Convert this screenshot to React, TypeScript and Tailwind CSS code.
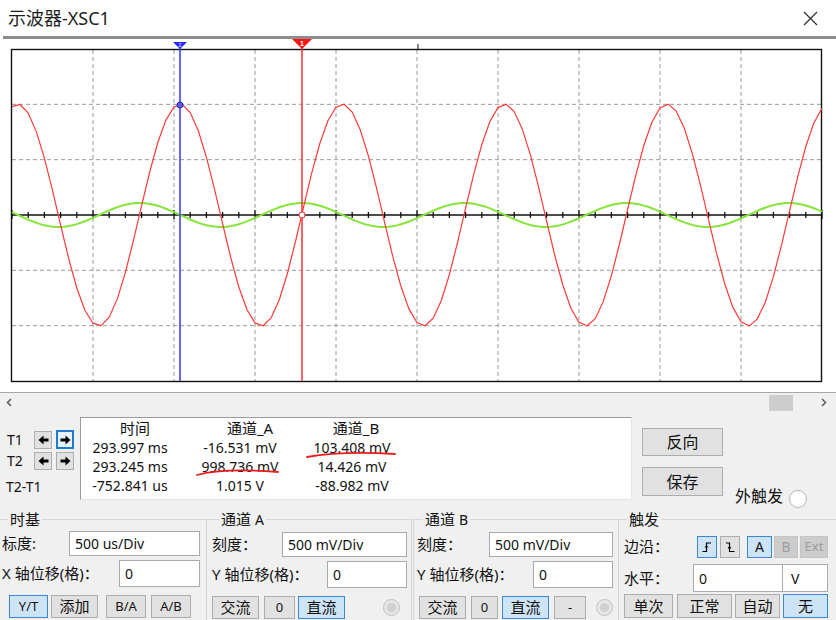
import React from "react";

const PERIOD = 162.3;
const CY = 176;

const wave = (amp: number, phaseX: number, step: number) => {
  const pts: string[] = [];
  for (let x = 12; x <= 822.01; x += step) {
    const y = CY - amp * Math.cos((2 * Math.PI * (x - phaseX)) / PERIOD);
    pts.push(`${x.toFixed(1)},${y.toFixed(1)}`);
  }
  return pts.join(" ");
};

const Scope = () => {
  const vlines = [1, 2, 3, 4, 5, 6, 7, 8, 9].map((k) => 12 + 81 * k);
  const hlines = [1, 2, 4, 5].map((k) => 10 + (332 / 6) * k);
  const ticks = Array.from({ length: 51 }, (_, i) => i);
  return (
    <svg width="836" height="353" className="block bg-white">
      {vlines.map((x) => (
        <line key={x} x1={x} y1={11} x2={x} y2={342} stroke="#9a9a9a" strokeWidth="1" strokeDasharray="4 3" />
      ))}
      {hlines.map((y) => (
        <line key={y} x1={12} y1={y} x2={822} y2={y} stroke="#9a9a9a" strokeWidth="1" strokeDasharray="4 3" />
      ))}
      <line x1={12} y1={CY} x2={822} y2={CY} stroke="#111" strokeWidth="1.5" />
      {ticks.map((i) => {
        const x = 12 + i * 16.2;
        const big = i % 5 === 0;
        return <line key={i} x1={x} y1={CY - (big ? 5 : 3)} x2={x} y2={CY + (big ? 4 : 3)} stroke="#111" strokeWidth="1.3" />;
      })}
      <rect x={11.5} y={10.5} width={810} height={332} fill="none" stroke="#111" strokeWidth="1.4" />
      <line x1={418} y1={5} x2={418} y2={10} stroke="#111" strokeWidth="1" />
      <polyline points={wave(12, 302, 4.05)} fill="none" stroke="#86e43a" strokeWidth="2" />
      <polyline points={wave(111, 180, 8.1)} fill="none" stroke="#ff3a3a" strokeWidth="1.2" />
      {/* cursor 2 (blue) */}
      <line x1={180} y1={4} x2={180} y2={342} stroke="#3434ff" strokeWidth="1.5" />
      <polygon points="173,3 187,3 180,10" fill="#2424ff" />
      <text x={180} y={8} fontSize="5" fill="#fff" textAnchor="middle" fontFamily="Liberation Sans, sans-serif">2</text>
      <circle cx={180} cy={66} r={3} fill="#5a5aff" stroke="#2a2a9a" strokeWidth="1" />
      {/* cursor 1 (red) */}
      <line x1={302} y1={4} x2={302} y2={342} stroke="#ff3030" strokeWidth="1.5" />
      <polygon points="292,0 312,0 302,10" fill="#ff1414" />
      <text x={302} y={7} fontSize="7" fontWeight="bold" fill="#fff" textAnchor="middle" fontFamily="Liberation Sans, sans-serif">1</text>
      <circle cx={302} cy={CY} r={3} fill="#fff" stroke="#ff3030" strokeWidth="1" />
    </svg>
  );
};

const Arrow = ({ dir }: { dir: "l" | "r" }) => (
  <svg width="11" height="10" viewBox="0 0 11 10">
    <path
      d={dir === "r" ? "M0.5 3.5 H5.5 V0.5 L10.5 5 L5.5 9.5 V6.5 H0.5 Z" : "M10.5 3.5 H5.5 V0.5 L0.5 5 L5.5 9.5 V6.5 H10.5 Z"}
      fill="#000"
    />
  </svg>
);

function Btn({
  className = "",
  on = false,
  dis = false,
  children,
}: {
  className?: string;
  on?: boolean;
  dis?: boolean;
  children?: React.ReactNode;
}) {
  const tone = on
    ? "border-[#3a87d4] bg-[#cde4f7] text-[#111]"
    : dis
    ? "border-[#c4c4c4] bg-[#cccccc] text-[#9c9c9c]"
    : "border-[#adadad] bg-[#e1e1e1] text-[#111]";
  return <div className={`flex items-center justify-center border ${tone} ${className}`}>{children}</div>;
}

function Field({ className = "", children }: { className?: string; children?: React.ReactNode }) {
  return (
    <div className={`flex items-center border border-[#a9a9a9] bg-white pl-[5px] text-[14px] text-[#111] ${className}`}>
      {children}
    </div>
  );
}

const Radio = ({ className = "", dim = false }: { className?: string; dim?: boolean }) => (
  <div
    className={`flex items-center justify-center rounded-full border ${
      dim ? "border-[#c2c2c2] bg-[#e6e6e6]" : "border-[#b5b5b5] bg-white"
    } ${className}`}
  >
    {dim && <div className="h-[9px] w-[9px] rounded-full bg-[#d0d0d0]" />}
  </div>
);

const EdgeIcon = ({ up }: { up: boolean }) => (
  <svg width="12" height="12" viewBox="0 0 12 12">
    <path d={up ? "M1.5 10.5 H5.5 V2 H10" : "M2 2 H5.5 V10.5 H10.5"} fill="none" stroke="#000" strokeWidth="1.2" />
    <path d={up ? "M4 6.5 L5.5 4.5 L7 6.5" : "M4 6 L5.5 8 L7 6"} fill="none" stroke="#000" strokeWidth="1" />
  </svg>
);

const Chevron = ({ dir }: { dir: "l" | "r" }) => (
  <svg width="6" height="9" viewBox="0 0 6 9">
    <path d={dir === "l" ? "M5 1 L1.5 4.5 L5 8" : "M1 1 L4.5 4.5 L1 8"} fill="none" stroke="#606060" strokeWidth="1.6" />
  </svg>
);

const rows = [
  ["293.997 ms", "-16.531 mV", "103.408 mV"],
  ["293.245 ms", "998.736 mV", "14.426 mV"],
  ["-752.841 us", "1.015 V", "-88.982 mV"],
];

export default function App() {
  return (
    <div className="h-[620px] w-[836px] overflow-hidden bg-[#f0f0f0] font-['Noto_Sans','Noto_Sans_CJK_SC',sans-serif] text-[#111]">
      {/* title bar */}
      <div className="flex h-[36px] items-center justify-between bg-white pl-[8px] pr-[18px]">
        <span className="text-[18px] leading-none text-[#1e1e1e]">示波器-XSC1</span>
        <svg width="15" height="15" viewBox="0 0 15 15">
          <path d="M1 1 L14 14 M14 1 L1 14" stroke="#333" strokeWidth="1.3" />
        </svg>
      </div>
      <div className="bg-white pl-[3px]">
        <div className="h-[3px] bg-[#8c8c8c]" />
      </div>
      <Scope />

      {/* scroll bar */}
      <div className="flex h-[20px] items-center border-t border-[#a8a8a8] pl-[6px]">
        <Chevron dir="l" />
        <div className="ml-[757px] mt-[2px] h-[16px] w-[24px] self-start bg-[#cdcdcd]" />
        <div className="ml-[28px]">
          <Chevron dir="r" />
        </div>
      </div>

      {/* measurement panel */}
      <div className="relative flex h-[93px] pt-[5px]">
        <div className="w-[80px] pt-[14px] text-[14px]">
          <div className="flex h-[17px] items-center">
            <span className="w-[34px] pl-[7px]">T1</span>
            <Btn className="h-[18px] w-[18px]">
              <Arrow dir="l" />
            </Btn>
            <div className="ml-[4px] flex h-[19px] w-[18px] items-center justify-center border-2 border-[#1f7bd1] bg-[#e5f1fb]">
              <Arrow dir="r" />
            </div>
          </div>
          <div className="mt-[4px] flex h-[17px] items-center">
            <span className="w-[34px] pl-[7px]">T2</span>
            <Btn className="h-[18px] w-[18px]">
              <Arrow dir="l" />
            </Btn>
            <Btn className="ml-[4px] h-[18px] w-[18px]">
              <Arrow dir="r" />
            </Btn>
          </div>
          <div className="mt-[9px] flex h-[16px] items-center pl-[6px]">T2-T1</div>
        </div>

        <div className="h-[83px] w-[552px] border border-[#9b9b9b] border-b-[#e4e4e4] border-r-[#e4e4e4] bg-white pt-[1px] text-[14px]">
          <div className="grid h-[19px] grid-cols-[98px_122px_102px] items-center text-[15px] leading-none">
            <span className="pl-[10px] text-center">时间</span>
            <span className="pl-[20px] text-center">通道_A</span>
            <span className="pl-[8px] text-center">通道_B</span>
          </div>
          {rows.map((r, i) => (
            <div key={i} className="grid h-[19px] grid-cols-[98px_122px_102px] items-center leading-none">
              {r.map((c, j) => (
                <span key={j} className="text-center">
                  {c}
                </span>
              ))}
            </div>
          ))}
        </div>

        <div className="ml-[10px] pt-[11px] text-[16px]">
          <Btn className="h-[28px] w-[81px]">反向</Btn>
          <Btn className="mt-[11px] h-[29px] w-[81px]">保存</Btn>
        </div>
        <div className="ml-[12px] mt-[69px] flex h-[20px] items-center text-[16px]">
          <span>外触发</span>
          <Radio className="ml-[6px] mt-[6px] h-[18px] w-[18px]" />
        </div>

        {/* hand-drawn annotations */}
        <svg className="absolute left-0 top-0" width="420" height="93" viewBox="0 0 420 93">
          <path d="M197 63 C215 58 240 57 278 60" fill="none" stroke="#ee1c1c" strokeWidth="1.8" strokeLinecap="round" />
          <path d="M307 45 C335 40 365 40 395 42" fill="none" stroke="#ee1c1c" strokeWidth="1.8" strokeLinecap="round" />
        </svg>
      </div>

      {/* bottom controls */}
      <div className="flex h-[115px] pt-[5px] text-[15px]">
        <fieldset className="h-[110px] w-[207px] border-t border-r border-[#d6d6d6]">
          <legend className="ml-[8px] px-[2px] leading-[18px]">时基</legend>
          <div className="mt-[3px] flex h-[25px] items-center">
            <span className="w-[69px] pl-[2px]">标度:</span>
            <Field className="h-[25px] w-[131px]">500 us/Div</Field>
          </div>
          <div className="mt-[4px] flex h-[27px] items-center">
            <span className="w-[119px] pl-[2px]">X 轴位移(格)：</span>
            <Field className="h-[27px] w-[81px]">0</Field>
          </div>
          <div className="mt-[8px] flex h-[23px] items-center">
            <Btn on className="ml-[9px] h-[23px] w-[39px] text-[13px]">Y/T</Btn>
            <Btn className="ml-[3px] h-[23px] w-[47px]">添加</Btn>
            <Btn className="ml-[8px] h-[23px] w-[40px] text-[13px]">B/A</Btn>
            <Btn className="ml-[5px] h-[23px] w-[40px] text-[13px]">A/B</Btn>
          </div>
        </fieldset>

        <fieldset className="h-[110px] w-[205px] border-t border-r border-[#d6d6d6] pl-[5px]">
          <legend className="ml-[7px] px-[2px] leading-[18px]">
            通道 <span className="text-[14px]">A</span>
          </legend>
          <div className="mt-[3px] flex h-[25px] items-center">
            <span className="w-[70px]">刻度：</span>
            <Field className="h-[25px] w-[125px]">500 mV/Div</Field>
          </div>
          <div className="mt-[4px] flex h-[27px] items-center">
            <span className="w-[115px]">Y 轴位移(格)：</span>
            <Field className="h-[27px] w-[80px]">0</Field>
          </div>
          <div className="mt-[8px] flex h-[23px] items-center">
            <Btn className="h-[23px] w-[47px]">交流</Btn>
            <Btn className="ml-[5px] h-[23px] w-[31px] text-[13px]">0</Btn>
            <Btn on className="ml-[3px] h-[23px] w-[47px]">直流</Btn>
            <Radio dim className="ml-[38px] h-[17px] w-[17px]" />
          </div>
        </fieldset>

        <fieldset className="ml-[1px] h-[110px] w-[206px] border-t border-r border-l border-[#d6d6d6] pl-[3px]">
          <legend className="ml-[6px] px-[2px] leading-[18px]">
            通道 <span className="text-[14px]">B</span>
          </legend>
          <div className="mt-[3px] flex h-[25px] items-center">
            <span className="w-[72px]">刻度：</span>
            <Field className="h-[25px] w-[124px]">500 mV/Div</Field>
          </div>
          <div className="mt-[4px] flex h-[27px] items-center">
            <span className="w-[116px]">Y 轴位移(格)：</span>
            <Field className="h-[27px] w-[80px]">0</Field>
          </div>
          <div className="mt-[8px] flex h-[23px] items-center">
            <Btn className="ml-[2px] h-[23px] w-[47px]">交流</Btn>
            <Btn className="ml-[5px] h-[23px] w-[27px] text-[13px]">0</Btn>
            <Btn on className="ml-[4px] h-[23px] w-[47px]">直流</Btn>
            <Btn className="ml-[5px] h-[23px] w-[32px] text-[13px]">-</Btn>
            <Radio dim className="ml-[10px] h-[17px] w-[17px]" />
          </div>
        </fieldset>

        <fieldset className="h-[110px] w-[217px] border-t border-[#d6d6d6] pl-[5px]">
          <legend className="ml-[3px] px-[2px] leading-[18px]">触发</legend>
          <div className="mt-[6px] flex h-[25px] items-center">
            <span className="w-[73px]">边沿：</span>
            <Btn on className="h-[22px] w-[20px]">
              <EdgeIcon up />
            </Btn>
            <Btn className="ml-[3px] h-[22px] w-[20px]">
              <EdgeIcon up={false} />
            </Btn>
            <Btn on className="ml-[7px] h-[22px] w-[25px] text-[14px]">A</Btn>
            <Btn dis className="ml-[2px] h-[22px] w-[24px] text-[14px]">B</Btn>
            <Btn dis className="ml-[2px] h-[22px] w-[28px] text-[13px]">Ext</Btn>
          </div>
          <div className="mt-[5px] flex h-[28px] items-center">
            <span className="w-[69px]">水平：</span>
            <Field className="h-[28px] w-[90px]">0</Field>
            <Field className="h-[28px] w-[45px] border-l-0 pl-[8px]">V</Field>
          </div>
          <div className="mt-[2px] flex h-[24px] items-center">
            <Btn className="h-[24px] w-[49px]">单次</Btn>
            <Btn className="ml-[4px] h-[24px] w-[55px]">正常</Btn>
            <Btn className="ml-[3px] h-[24px] w-[45px]">自动</Btn>
            <Btn on className="ml-[3px] h-[24px] w-[45px]">无</Btn>
          </div>
        </fieldset>
      </div>
    </div>
  );
}
